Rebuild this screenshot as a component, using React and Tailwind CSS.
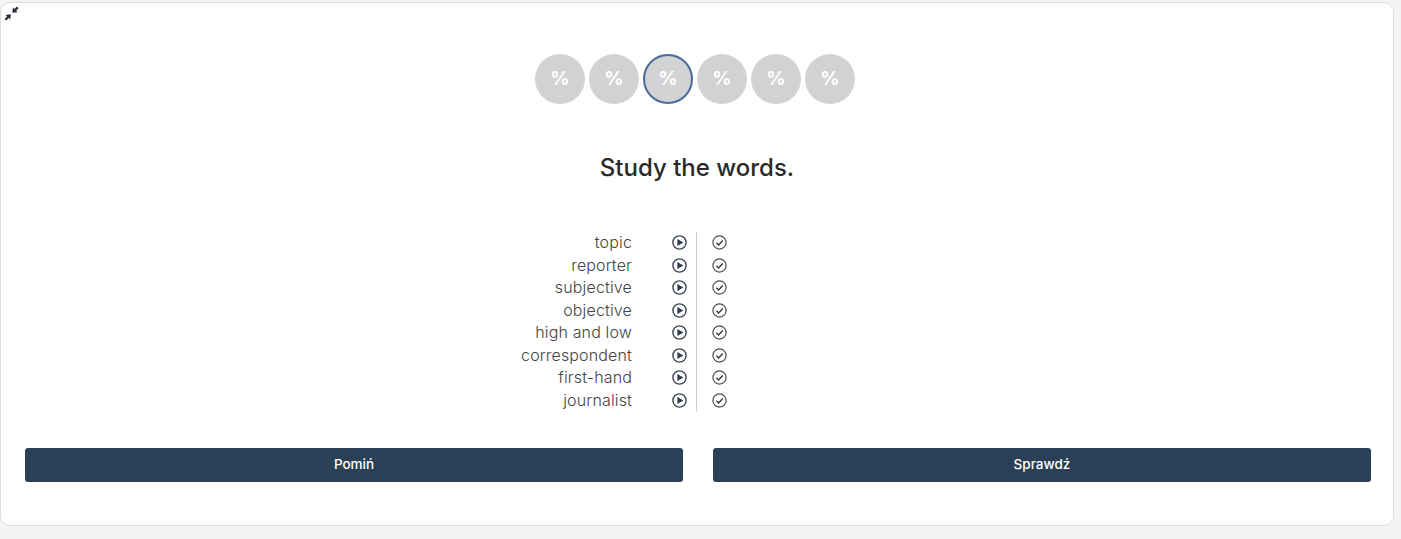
import React from 'react';

const words = ['topic', 'reporter', 'subjective', 'objective', 'high and low', 'correspondent', 'first-hand', 'journalist'];

const CollapseIcon = () => (
    <svg width="15" height="15" viewBox="0 0 15 15" fill="#2b3038">
        <path d="M14.6 2.2 12.9.5 10.4 3 8.9 1.5 8.3 6.8 13.6 6.2 12.1 4.7Z" />
        <path d="M.5 12.9 2.2 14.6 4.7 12.1 6.2 13.6 6.8 8.3 1.5 8.9 3 10.4Z" />
    </svg>
);

const PlayIcon = () => (
    <svg width="15" height="15" viewBox="0 0 15 15" className="block">
        <circle cx="7.5" cy="7.5" r="6.6" fill="none" stroke="#3a4652" strokeWidth="1.4" />
        <path d="M5.4 3.9 11.4 7.5 5.4 11.1Z" fill="#2b3f55" />
    </svg>
);

const CheckIcon = () => (
    <svg width="15" height="15" viewBox="0 0 15 15" className="block">
        <circle cx="7.5" cy="7.5" r="6.6" fill="none" stroke="#484d52" strokeWidth="1.2" />
        <path d="M4.4 7.7 6.6 9.9 10.8 5.4" fill="none" stroke="#33383d" strokeWidth="1.4" />
    </svg>
);

const Badge = ({ active }) => (
    <div className={active
        ? 'w-[50px] h-[50px] rounded-full bg-[#d2d3d5] border-2 border-[#4a6a9a] flex items-center justify-center text-white text-[19px] font-bold'
        : 'w-[50px] h-[50px] rounded-full bg-[#d2d2d2] flex items-center justify-center text-white text-[19px] font-bold'}>
        %
    </div>
);

export default function App() {
    return (
        <div className="w-[1401px] h-[539px] overflow-hidden bg-[#f3f5f5] pt-[2px] font-['Inter',sans-serif]">
            <div className="relative w-[1394px] h-[524px] bg-white border border-[#dcdede] rounded-[10px] flex flex-col">
                <div className="absolute left-[3px] top-[3px]">
                    <CollapseIcon />
                </div>

                {/* Score circles */}
                <div className="flex gap-1 pl-[534px] pt-[51px]">
                    {[0, 1, 2, 3, 4, 5].map((i) => (
                        <Badge key={i} active={i === 2} />
                    ))}
                </div>

                <h1 className="mt-[46px] h-[36px] leading-[36px] text-center text-[24px] font-medium text-[#2a2a2a]">
                    Study the words.
                </h1>

                {/* Word list */}
                <div className="mt-[45.5px] flex flex-col">
                    {words.map((word) => (
                        <div key={word} className="flex h-[22.5px] items-center">
                            <span className="w-[631px] pb-[1px] text-right text-[16px] font-light tracking-[0.15px] text-[#444444] whitespace-nowrap leading-none">
                                {word}
                            </span>
                            <div className="w-[65px] h-full border-r border-[#cfcfcf] flex items-center pl-[40px]">
                                <PlayIcon />
                            </div>
                            <div className="pl-[15px]">
                                <CheckIcon />
                            </div>
                        </div>
                    ))}
                </div>

                {/* Buttons */}
                <div className="mt-[36.5px] flex gap-[30px] pl-[24px]">
                    <button className="w-[658px] h-[34px] shrink-0 pb-[1px] rounded-[3px] bg-[#2a4056] text-white text-[13.5px] font-medium">Pomiń</button>
                    <button className="w-[658px] h-[34px] shrink-0 pb-[1px] rounded-[3px] bg-[#2a4056] text-white text-[13.5px] font-medium">Sprawdź</button>
                </div>
            </div>
        </div>
    );
}
